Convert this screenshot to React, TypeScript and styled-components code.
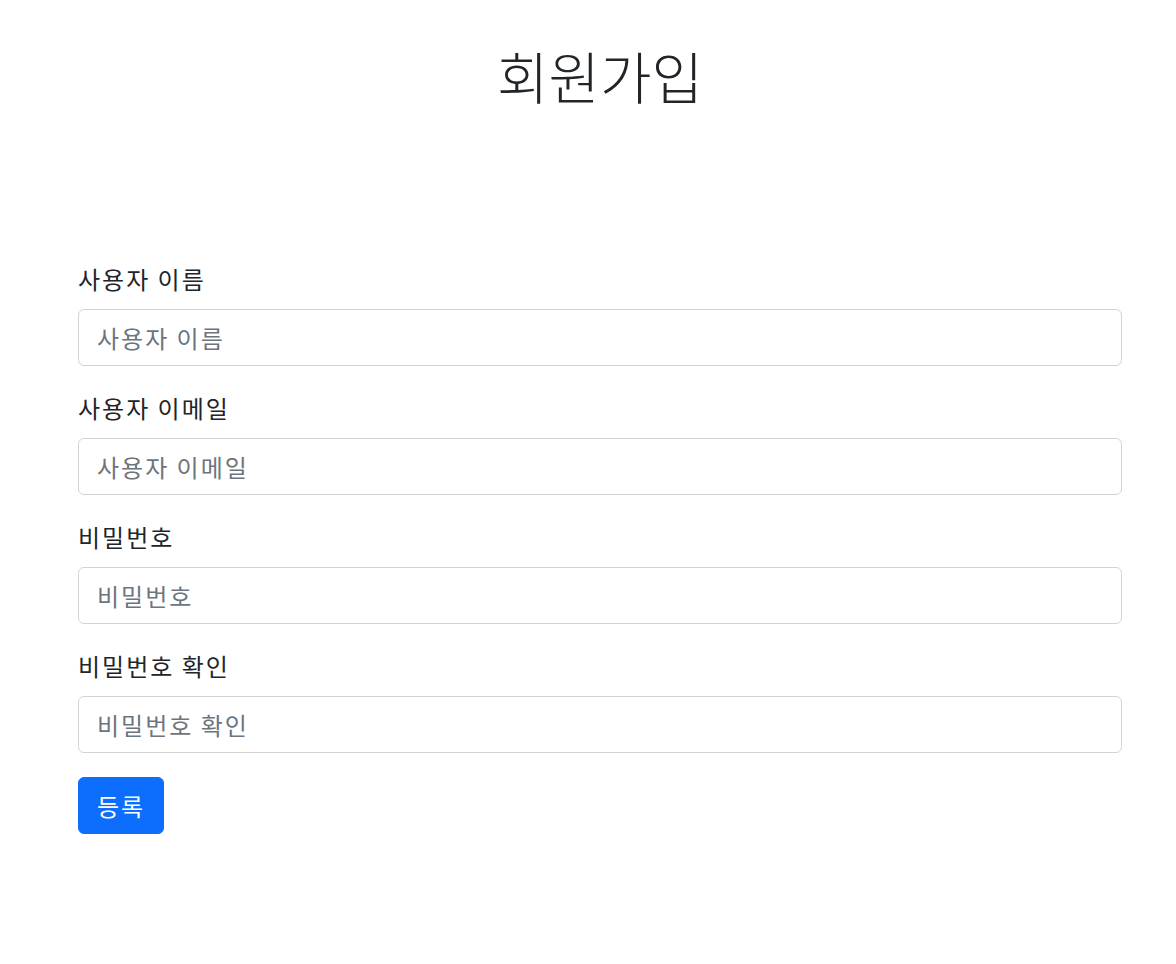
import React from 'react'
import styled, { createGlobalStyle } from 'styled-components'

const GlobalStyle = createGlobalStyle`
  * { box-sizing: border-box; }
  body {
    margin: 0;
    background: #fff;
    color: #212529;
    font-family: "Noto Sans CJK KR", "Noto Sans", sans-serif;
    font-size: 24px;
    line-height: 1.5;
  }
`

const Page = styled.div`
  width: 1044px;
  margin-left: 78px;
`

const Title = styled.h1`
  margin: 39px 0 150px;
  height: 72px;
  font-size: 56px;
  font-weight: 300;
  line-height: 72px;
  text-align: center;
`

const Field = styled.div`
  margin-bottom: 24px;
`

const Label = styled.label`
  display: block;
  margin-bottom: 12px;
  height: 36px;
  color: #212529;
  letter-spacing: 2px;
`

const Input = styled.input`
  display: block;
  width: 100%;
  height: 57px;
  padding: 9px 18px;
  font: inherit;
  letter-spacing: 2px;
  color: #212529;
  border: 1px solid #ced4da;
  border-radius: 6px;
  outline: none;
  &::placeholder {
    color: #6c757d;
  }
`

const Button = styled.button`
  height: 57px;
  padding: 9px 18px;
  font: inherit;
  letter-spacing: 2px;
  color: #fff;
  background: #0d6efd;
  border: 1px solid #0d6efd;
  border-radius: 6px;
  cursor: pointer;
`

const fields = [
  { id: 'name', label: '사용자 이름', type: 'text' },
  { id: 'email', label: '사용자 이메일', type: 'email' },
  { id: 'pw', label: '비밀번호', type: 'password' },
  { id: 'pw2', label: '비밀번호 확인', type: 'password' },
]

export default function App() {
  return (
    <>
      <GlobalStyle />
      <Page>
        <Title>회원가입</Title>
        <form onSubmit={(e) => e.preventDefault()}>
          {fields.map((f) => (
            <Field key={f.id}>
              <Label htmlFor={f.id}>{f.label}</Label>
              <Input id={f.id} type={f.type} placeholder={f.label} />
            </Field>
          ))}
          <Button type="submit">등록</Button>
        </form>
      </Page>
    </>
  )
}
